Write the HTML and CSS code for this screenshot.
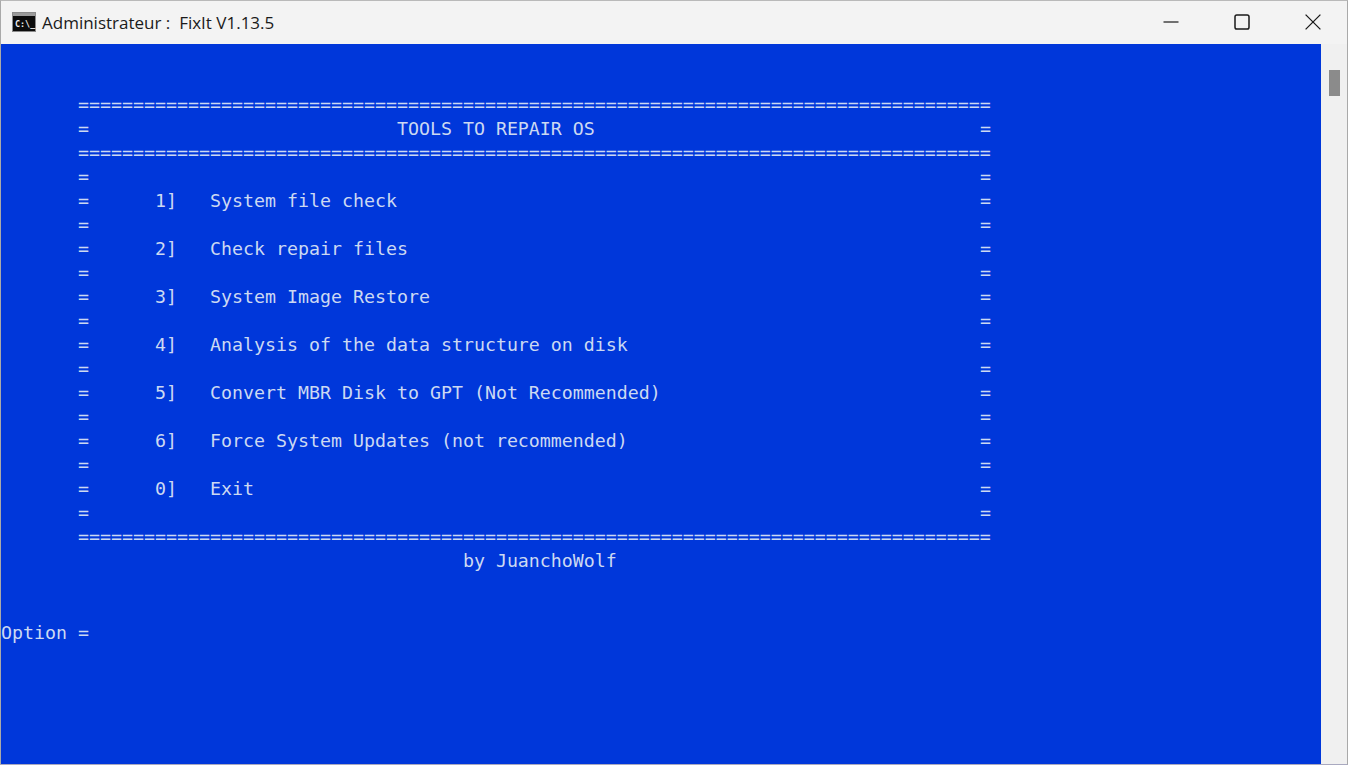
FILE: index.html
```html
<!DOCTYPE html>
<html lang="fr">
<head>
<meta charset="utf-8">
<title>FixIt</title>
<link rel="stylesheet" href="styles.css">
</head>
<body>
<div class="window">
  <header class="titlebar">
    <svg class="app-icon" width="24" height="20" viewBox="0 0 24 20">
      <rect x="0.5" y="0.5" width="23" height="19" fill="#0c0c0c" stroke="#8a8a8a"/>
      <rect x="1" y="1" width="22" height="3" fill="#9a9a9a"/>
      <text x="3" y="15" class="app-icon-text">C:\_</text>
    </svg>
    <span class="title">Administrateur :&nbsp; FixIt V1.13.5</span>
    <div class="controls">
      <svg class="ctl" width="16" height="16" viewBox="0 0 16 16"><path d="M0.5 8H15.5" stroke="#1a1a1a" stroke-width="1.2" fill="none"/></svg>
      <svg class="ctl" width="16" height="16" viewBox="0 0 16 16"><rect x="1" y="1" width="14" height="14" rx="1.8" stroke="#1a1a1a" stroke-width="1.5" fill="none"/></svg>
      <svg class="ctl" width="16" height="16" viewBox="0 0 16 16"><path d="M0.6 0.6L15.4 15.4M15.4 0.6L0.6 15.4" stroke="#1a1a1a" stroke-width="1.3" fill="none"/></svg>
    </div>
  </header>
  <div class="body">
    <main class="console">
      <div class="line"></div>
      <div class="line"></div>
      <div class="box">
        <div class="line">===================================================================================</div>
        <div class="line row"><span class="cell">=                            TOOLS TO REPAIR OS</span><span>=</span></div>
        <div class="line">===================================================================================</div>
        <div class="line row"><span>=</span><span>=</span></div>
        <div class="line row"><span class="cell">=      1]   System file check</span><span>=</span></div>
        <div class="line row"><span>=</span><span>=</span></div>
        <div class="line row"><span class="cell">=      2]   Check repair files</span><span>=</span></div>
        <div class="line row"><span>=</span><span>=</span></div>
        <div class="line row"><span class="cell">=      3]   System Image Restore</span><span>=</span></div>
        <div class="line row"><span>=</span><span>=</span></div>
        <div class="line row"><span class="cell">=      4]   Analysis of the data structure on disk</span><span>=</span></div>
        <div class="line row"><span>=</span><span>=</span></div>
        <div class="line row"><span class="cell">=      5]   Convert MBR Disk to GPT (Not Recommended)</span><span>=</span></div>
        <div class="line row"><span>=</span><span>=</span></div>
        <div class="line row"><span class="cell">=      6]   Force System Updates (not recommended)</span><span>=</span></div>
        <div class="line row"><span>=</span><span>=</span></div>
        <div class="line row"><span class="cell">=      0]   Exit</span><span>=</span></div>
        <div class="line row"><span>=</span><span>=</span></div>
        <div class="line">===================================================================================</div>
        <div class="line">                                   by JuanchoWolf</div>
      </div>
      <div class="line"></div>
      <div class="line"></div>
      <div class="line">Option =</div>
    </main>
    <aside class="scrollbar"><div class="thumb"></div></aside>
  </div>
</div>
</body>
</html>
```
FILE: styles.css
```css
* { box-sizing: border-box; }
html, body { margin: 0; height: 100%; overflow: hidden; }
.window {
  width: 1348px;
  height: 765px;
  display: flex;
  flex-direction: column;
  background: #f2f2f2;
  border-top: 1px solid #b9b9b9;
  border-left: 1px solid #a9a9a9;
  border-right: 1px solid #a9a9a9;
  border-bottom: 1px solid #a9a9c0;
}
.titlebar {
  height: 43px;
  flex: none;
  display: flex;
  align-items: center;
  padding-left: 11px;
  background: #f3f3f3;
}
.app-icon { flex: none; margin-top: -1px; }
.app-icon-text {
  font-family: "DejaVu Sans Mono", monospace;
  font-size: 8.4px;
  font-weight: 700;
  fill: #f0f0f0;
}
.title {
  margin-left: 6px;
  font-family: "Open Sans", sans-serif;
  font-size: 17px;
  color: #1a1a1a;
  white-space: pre;
}
.controls {
  margin-left: auto;
  display: flex;
  align-items: center;
  gap: 55px;
  padding-right: 26px;
  margin-top: -1px;
}
.body { flex: 1; display: flex; min-height: 0; }
.console {
  flex: 1;
  background: #0037da;
  color: #ccd9f2;
  font-family: "DejaVu Sans Mono", monospace;
  font-size: 18.27px;
  padding-top: 1px;
  overflow: hidden;
}
.line { height: 24px; line-height: 24px; white-space: pre; }
.box { width: 990px; padding-left: 77px; }
.row { display: flex; justify-content: space-between; }
.cell { white-space: pre; }
.scrollbar {
  width: 26px;
  flex: none;
  background: #f0f0f0;
  padding: 26px 7px 0 8px;
}
.thumb { height: 26px; background: #8b8b8b; }
```
